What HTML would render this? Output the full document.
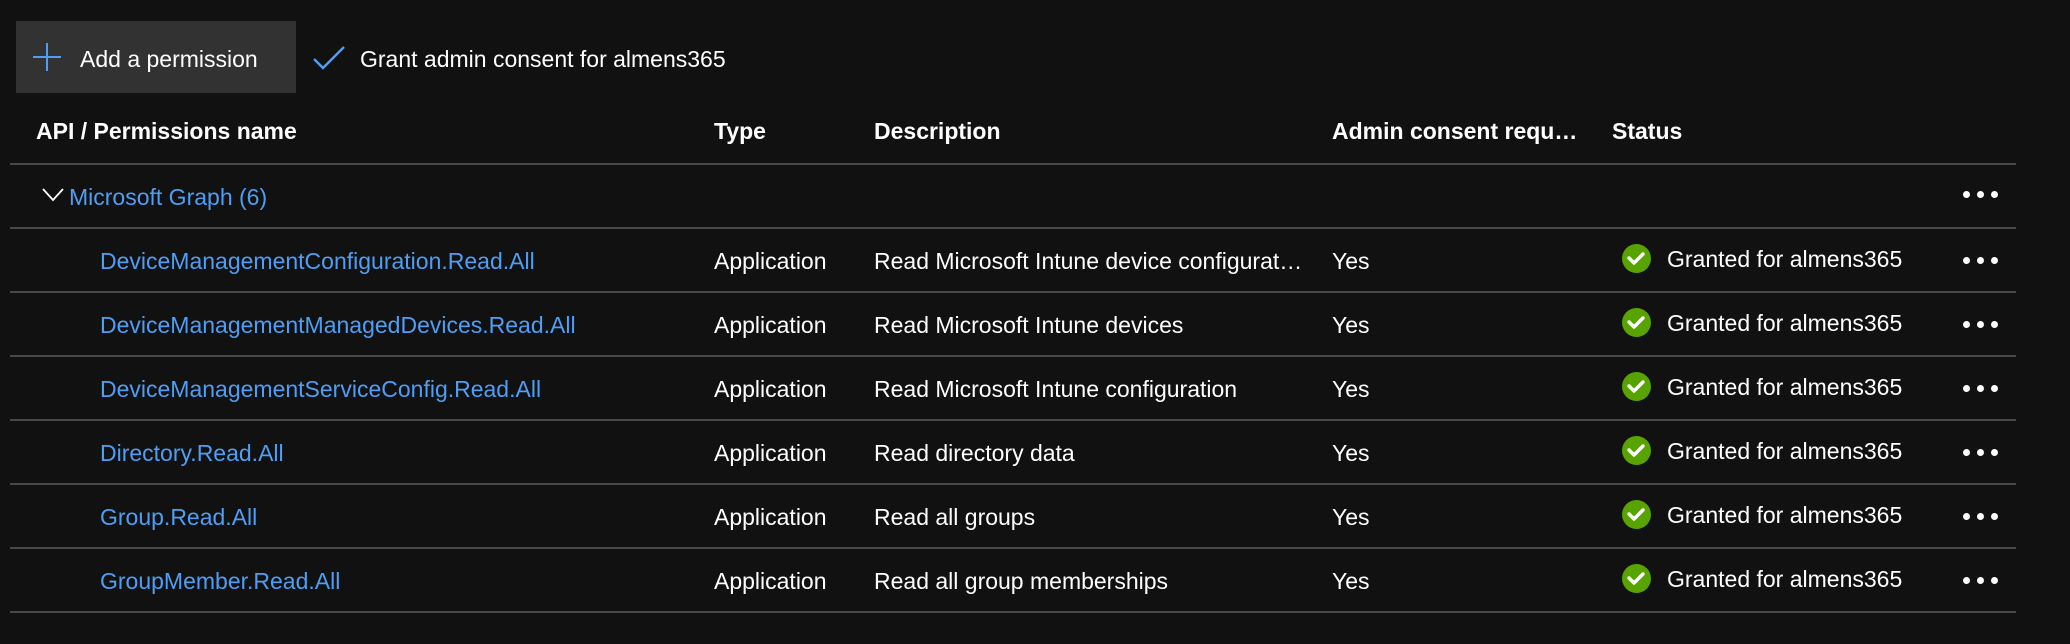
<!DOCTYPE html>
<html><head><style>
body{margin:0;width:2070px;height:644px;background:#111111;font-family:"Segoe UI","Liberation Sans",sans-serif;color:#fff;position:relative;overflow:hidden;font-size:23px}
.a{position:absolute;white-space:nowrap;line-height:30px}
.btn{position:absolute;left:16px;top:21px;width:280px;height:72px;background:#323232}
.line{position:absolute;left:10px;width:2006px;height:2px;background:#474747}
.link{color:#4e9ef5}
.h{font-weight:bold}
.chk{position:absolute;width:29px;height:29px;border-radius:50%;background:#57a300}
.dots{position:absolute;left:1963px;width:36px;height:7px}
.dots i{position:absolute;top:0;width:7px;height:7px;border-radius:50%;background:#fff}
.ell{overflow:hidden;text-overflow:ellipsis}
</style></head><body>
<div class="btn"></div>
<svg style="position:absolute;left:33px;top:43px" width="28" height="28"><path d="M14 0V28M0 14H28" stroke="#4e9ef5" stroke-width="2"/></svg>
<div class="a" style="left:80px;top:44px">Add a permission</div>
<svg style="position:absolute;left:312px;top:46px" width="34" height="24"><path d="M2 13L11 22L32 1" stroke="#4e9ef5" stroke-width="2.4" fill="none"/></svg>
<div class="a" style="left:360px;top:44px">Grant admin consent for almens365</div>

<div class="a h" style="left:36px;top:116px">API / Permissions name</div>
<div class="a h" style="left:714px;top:116px">Type</div>
<div class="a h" style="left:874px;top:116px">Description</div>
<div class="a h ell" style="left:1332px;top:116px;width:246px">Admin consent requ…</div>
<div class="a h" style="left:1612px;top:116px">Status</div>

<div class="line" style="top:163px"></div>
<svg style="position:absolute;left:42px;top:188px" width="22" height="14"><path d="M1 1L11 12L21 1" stroke="#fff" stroke-width="1.8" fill="none"/></svg>
<div class="a link" style="left:69px;top:182px">Microsoft Graph (6)</div>
<div class="dots" style="top:191px"><i style="left:0"></i><i style="left:14px"></i><i style="left:28px"></i></div>

<div class="line" style="top:227px"></div>
<div class="line" style="top:291px"></div>
<div class="line" style="top:355px"></div>
<div class="line" style="top:419px"></div>
<div class="line" style="top:483px"></div>
<div class="line" style="top:547px"></div>
<div class="line" style="top:611px"></div>

<div class="a link" style="left:100px;top:246px">DeviceManagementConfiguration.Read.All</div>
<div class="a" style="left:714px;top:246px">Application</div>
<div class="a ell" style="left:874px;top:246px;width:432px">Read Microsoft Intune device configuration</div>
<div class="a" style="left:1332px;top:246px">Yes</div>
<div class="chk" style="left:1622px;top:244px"></div>
<div class="a" style="left:1667px;top:244px">Granted for almens365</div>
<div class="dots" style="top:257px"><i style="left:0"></i><i style="left:14px"></i><i style="left:28px"></i></div>

<div class="a link" style="left:100px;top:310px">DeviceManagementManagedDevices.Read.All</div>
<div class="a" style="left:714px;top:310px">Application</div>
<div class="a" style="left:874px;top:310px">Read Microsoft Intune devices</div>
<div class="a" style="left:1332px;top:310px">Yes</div>
<div class="chk" style="left:1622px;top:308px"></div>
<div class="a" style="left:1667px;top:308px">Granted for almens365</div>
<div class="dots" style="top:321px"><i style="left:0"></i><i style="left:14px"></i><i style="left:28px"></i></div>

<div class="a link" style="left:100px;top:374px">DeviceManagementServiceConfig.Read.All</div>
<div class="a" style="left:714px;top:374px">Application</div>
<div class="a" style="left:874px;top:374px">Read Microsoft Intune configuration</div>
<div class="a" style="left:1332px;top:374px">Yes</div>
<div class="chk" style="left:1622px;top:372px"></div>
<div class="a" style="left:1667px;top:372px">Granted for almens365</div>
<div class="dots" style="top:385px"><i style="left:0"></i><i style="left:14px"></i><i style="left:28px"></i></div>

<div class="a link" style="left:100px;top:438px">Directory.Read.All</div>
<div class="a" style="left:714px;top:438px">Application</div>
<div class="a" style="left:874px;top:438px">Read directory data</div>
<div class="a" style="left:1332px;top:438px">Yes</div>
<div class="chk" style="left:1622px;top:436px"></div>
<div class="a" style="left:1667px;top:436px">Granted for almens365</div>
<div class="dots" style="top:449px"><i style="left:0"></i><i style="left:14px"></i><i style="left:28px"></i></div>

<div class="a link" style="left:100px;top:502px">Group.Read.All</div>
<div class="a" style="left:714px;top:502px">Application</div>
<div class="a" style="left:874px;top:502px">Read all groups</div>
<div class="a" style="left:1332px;top:502px">Yes</div>
<div class="chk" style="left:1622px;top:500px"></div>
<div class="a" style="left:1667px;top:500px">Granted for almens365</div>
<div class="dots" style="top:513px"><i style="left:0"></i><i style="left:14px"></i><i style="left:28px"></i></div>

<div class="a link" style="left:100px;top:566px">GroupMember.Read.All</div>
<div class="a" style="left:714px;top:566px">Application</div>
<div class="a" style="left:874px;top:566px">Read all group memberships</div>
<div class="a" style="left:1332px;top:566px">Yes</div>
<div class="chk" style="left:1622px;top:564px"></div>
<div class="a" style="left:1667px;top:564px">Granted for almens365</div>
<div class="dots" style="top:577px"><i style="left:0"></i><i style="left:14px"></i><i style="left:28px"></i></div>

<svg style="position:absolute;left:0;top:0" width="2070" height="644">
<g fill="none" stroke="#fff" stroke-width="3.4" stroke-linecap="round" stroke-linejoin="round">
<path d="M1629 258l5 5l9-9"/><path d="M1629 322l5 5l9-9"/><path d="M1629 386l5 5l9-9"/>
<path d="M1629 450l5 5l9-9"/><path d="M1629 514l5 5l9-9"/><path d="M1629 578l5 5l9-9"/>
</g></svg>
</body></html>
